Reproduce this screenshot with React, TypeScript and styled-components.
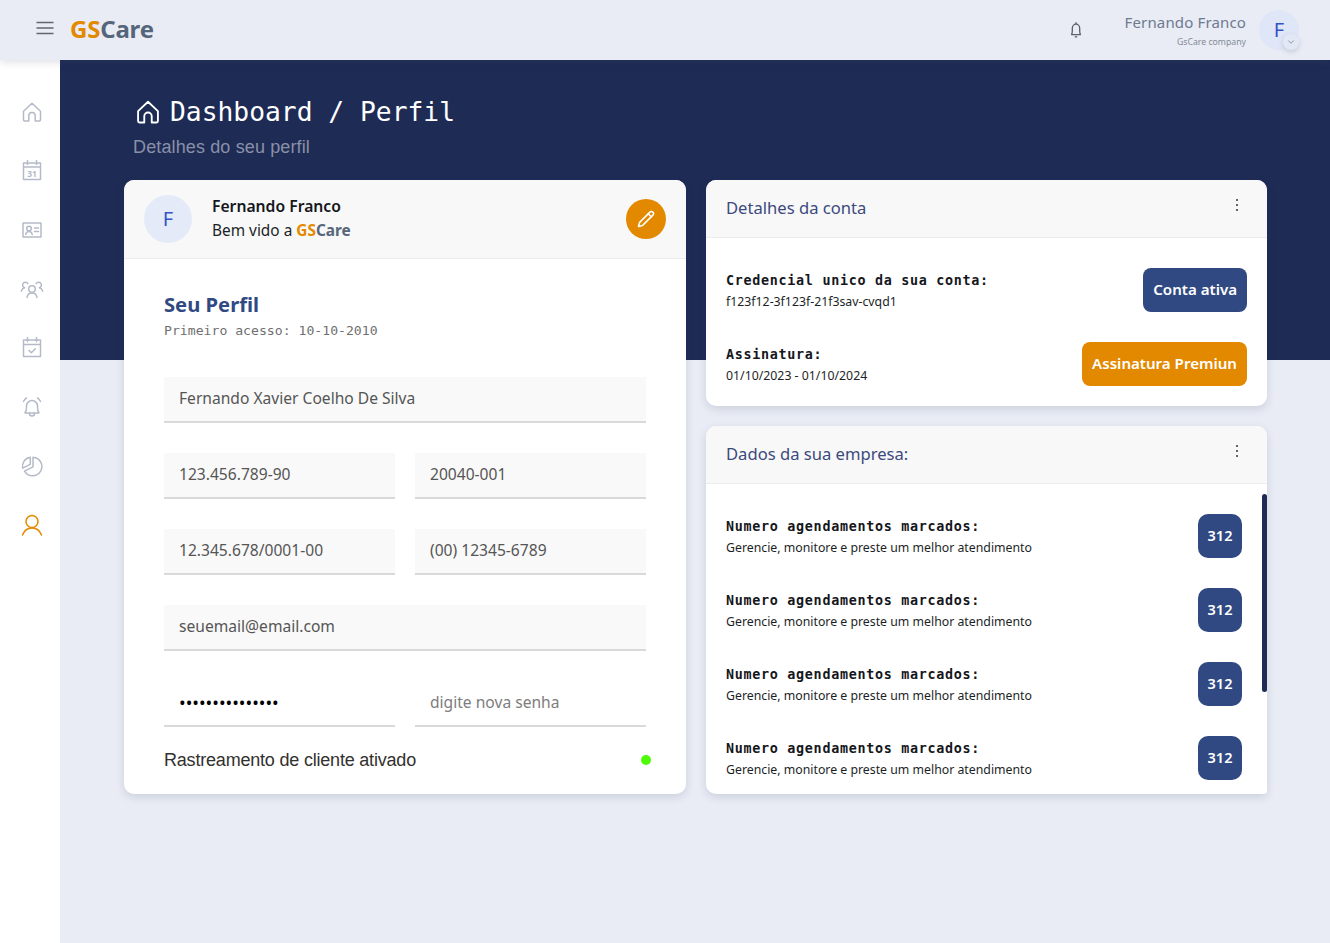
import React from "react";
import styled, { createGlobalStyle } from "styled-components";
import { Pencil, ChevronDown } from "lucide-react";

const Global = createGlobalStyle`
  html, body { margin: 0; padding: 0; }
  body {
    background: #e9ecf5;
    font-family: "Noto Sans", "Open Sans", sans-serif;
    overflow: hidden;
  }
  * { box-sizing: border-box; }
`;

const ORANGE = "#e38900";
const BLUE = "#314982";
const NAVY = "#1e2b55";
const MONO = `"DejaVu Sans Mono", "Liberation Mono", monospace`;

const Page = styled.div`
  display: flex;
  flex-direction: column;
  height: 943px;
`;

const TopBar = styled.header`
  position: relative;
  z-index: 2;
  flex: 0 0 60px;
  display: flex;
  align-items: center;
  padding: 0 31px 0 36px;
  background: #e9ecf5;
  box-shadow: 0 2px 8px rgba(60, 70, 100, 0.18);
`;

const Burger = styled.svg`
  width: 18px;
  height: 14px;
  margin: -4px 16px 0 0;
  color: #5f6670;
`;

const Logo = styled.div`
  flex: 1;
  padding-bottom: 3px;
  font-size: 24px;
  font-weight: 700;
  color: #56667a;
  letter-spacing: -0.2px;
`;

const Accent = styled.span`
  color: ${ORANGE};
`;

const BellIcon = styled.svg`
  width: 16px;
  height: 18px;
  margin-right: 41px;
  color: #5a5f66;
`;

const UserInfo = styled.div`
  display: flex;
  flex-direction: column;
  align-items: flex-end;
  margin-right: 13px;
`;

const UserName = styled.div`
  font-size: 15px;
  line-height: 18px;
  letter-spacing: 0.15px;
  color: #6d7a90;
`;

const UserCompany = styled.div`
  margin-top: 6px;
  font-size: 8.7px;
  line-height: 11px;
  color: #838a96;
`;

const TopAvatar = styled.div`
  position: relative;
  width: 40px;
  height: 40px;
  padding-bottom: 2px;
  border-radius: 50%;
  display: flex;
  align-items: center;
  justify-content: center;
  background: #dfe6f7;
  color: #3453c4;
  font-size: 20px;
`;

const AvatarChevron = styled.div`
  position: absolute;
  right: 0;
  bottom: 0;
  width: 16px;
  height: 16px;
  border-radius: 50%;
  display: flex;
  align-items: center;
  justify-content: center;
  background: #e3e8f6;
  color: #7d8798;
  box-shadow: 0 2px 5px rgba(60, 70, 100, 0.2);
`;

const Body = styled.div`
  flex: 1;
  display: flex;
  min-height: 0;
`;

const Sidebar = styled.nav`
  flex: 0 0 60px;
  display: flex;
  flex-direction: column;
  align-items: center;
  gap: 35px;
  padding: 40px 0 0 4px;
  background: #fff;
`;

const NavIcon = styled.svg<{ $active?: boolean }>`
  width: 24px;
  height: 24px;
  fill: none;
  stroke: ${(p) => (p.$active ? ORANGE : "#b4bac7")};
  stroke-width: 1.5;
  stroke-linecap: round;
  stroke-linejoin: round;
`;

const Main = styled.main`
  flex: 1;
  padding: 34px 63px 0 64px;
  background: linear-gradient(${NAVY} 300px, transparent 300px);
`;

const TitleRow = styled.div`
  display: flex;
  align-items: center;
  gap: 8px;
  height: 36px;
  padding-left: 10px;
`;

const Title = styled.h1`
  margin: 0;
  font-family: ${MONO};
  font-size: 26.3px;
  font-weight: 400;
  color: #fff;
  white-space: pre;
`;

const TitleIcon = styled.svg`
  width: 28px;
  height: 28px;
  fill: none;
  stroke: #fff;
  stroke-width: 1.6;
  stroke-linecap: round;
  stroke-linejoin: round;
`;

const Subtitle = styled.div`
  margin: 7px 0 0 9px;
  font-family: "Liberation Sans", Arial, sans-serif;
  font-size: 18px;
  line-height: 21px;
  letter-spacing: 0.13px;
  color: #8a90a7;
`;

const Columns = styled.div`
  display: grid;
  grid-template-columns: 562px 561px;
  gap: 20px;
  margin-top: 22px;
`;

const Card = styled.section<{ $squareEnd?: boolean }>`
  background: #fff;
  border-radius: 10px;
  border-bottom-right-radius: ${(p) => (p.$squareEnd ? "3px" : "10px")};
  box-shadow: 0 3px 8px rgba(50, 60, 90, 0.16);
  overflow: hidden;
`;

const RightColumn = styled.div`
  display: flex;
  flex-direction: column;
  gap: 20px;
`;

const ProfileHead = styled.div`
  display: flex;
  align-items: center;
  height: 79px;
  padding: 0 20px;
  background: #f8f8f8;
  border-bottom: 1px solid #ececec;
`;

const HeadAvatar = styled.div`
  flex: 0 0 48px;
  height: 48px;
  padding-bottom: 2px;
  border-radius: 50%;
  display: flex;
  align-items: center;
  justify-content: center;
  background: #e4eaf8;
  color: #3453c4;
  font-size: 20px;
`;

const HeadText = styled.div`
  flex: 1;
  margin-left: 20px;
  padding-bottom: 1px;
`;

const HeadName = styled.div`
  font-size: 15.7px;
  font-weight: 600;
  line-height: 22px;
  color: #15171c;
`;

const HeadGreet = styled.div`
  margin-top: 3px;
  font-size: 15.4px;
  line-height: 22px;
  color: #1c1f26;
`;

const Brand = styled.b`
  font-weight: 700;
  color: #56667a;
`;

const EditButton = styled.button`
  width: 40px;
  height: 40px;
  padding: 0;
  border: 0;
  border-radius: 50%;
  display: flex;
  align-items: center;
  justify-content: center;
  background: ${ORANGE};
  color: #fff;
`;

const ProfileBody = styled.div`
  display: flex;
  flex-direction: column;
  height: 535px;
  padding: 30px 40px 0;
`;

const SectionTitle = styled.h2`
  margin: 0;
  font-size: 20.2px;
  font-weight: 700;
  line-height: 30px;
  color: ${BLUE};
`;

const FirstAccess = styled.div`
  margin-top: 2px;
  font-family: ${MONO};
  font-size: 13.15px;
  line-height: 20px;
  color: #6f6f6f;
`;

const Form = styled.div`
  display: grid;
  grid-template-columns: 1fr 1fr;
  gap: 30px 20px;
  margin-top: 36px;
`;

const Field = styled.input<{ $wide?: boolean; $plain?: boolean }>`
  grid-column: ${(p) => (p.$wide ? "1 / -1" : "auto")};
  width: 100%;
  height: 46px;
  padding: 0 15px 2px;
  border: 0;
  border-bottom: 2px solid #d9d9dc;
  outline: none;
  background: ${(p) => (p.$plain ? "#fff" : "#f9f9f9")};
  font-family: "Noto Sans", sans-serif;
  font-size: 15.6px;
  color: #555;
  &::placeholder {
    color: #7d7d7d;
    opacity: 1;
  }
  &[type="password"] {
    color: #000;
    font-size: 17.7px;
  }
`;

const Tracking = styled.div`
  display: flex;
  align-items: center;
  justify-content: space-between;
  margin-top: 21px;
  font-family: "Liberation Sans", Arial, sans-serif;
  font-size: 18px;
  line-height: 24px;
  letter-spacing: -0.2px;
  color: #33302e;
`;

const StatusDot = styled.span`
  width: 10px;
  height: 10px;
  margin-right: -5px;
  border-radius: 50%;
  background: #4cfb05;
`;

const PanelHead = styled.div`
  display: flex;
  align-items: center;
  justify-content: space-between;
  height: 58px;
  padding: 0 28px 0 20px;
  background: #f8f8f8;
  border-bottom: 1px solid #ececec;
`;

const PanelTitle = styled.h3`
  margin: -2px 0 0;
  font-size: 16.6px;
  font-weight: 400;
  color: #3c4a7d;
`;

const Kebab = styled.div`
  display: flex;
  flex-direction: column;
  gap: 2.5px;
  margin: -7px 1px 0 0;
  & > i {
    width: 2.5px;
    height: 2.5px;
    border-radius: 50%;
    background: #333;
  }
`;

const AccountBody = styled.div`
  display: flex;
  flex-direction: column;
  gap: 30px;
  height: 168px;
  padding: 30px 20px 0;
`;

const InfoRow = styled.div`
  display: flex;
  align-items: center;
  justify-content: space-between;
  height: 44px;
`;

const InfoLabel = styled.div`
  padding-top: 2px;
  font-family: ${MONO};
  font-size: 13.4px;
  font-weight: 700;
  line-height: 20px;
  letter-spacing: 0.7px;
  color: #15171c;
  white-space: pre;
`;

const InfoText = styled.div`
  margin-top: 1px;
  font-size: 12.3px;
  line-height: 20px;
  color: #1c1f26;
`;

const ActionPill = styled.div<{ $color: string }>`
  height: 44px;
  padding: 0 10px 2px;
  border-radius: 8px;
  display: flex;
  align-items: center;
  background: ${(p) => p.$color};
  color: #fff;
  font-size: 15.1px;
  font-weight: 600;
`;

const CountBadge = styled.div`
  width: 44px;
  height: 44px;
  padding-bottom: 2px;
  border-radius: 10px;
  display: flex;
  align-items: center;
  justify-content: center;
  background: ${BLUE};
  color: #fff;
  font-size: 14.5px;
  font-weight: 600;
`;

const ScrollArea = styled.div`
  position: relative;
  display: flex;
  flex-direction: column;
  gap: 30px;
  height: 310px;
  padding: 30px 25px 0 20px;
  overflow: hidden;
`;

const ScrollThumb = styled.div`
  position: absolute;
  top: 10px;
  right: 0;
  width: 5px;
  height: 198px;
  border-radius: 3px;
  background: ${NAVY};
`;

const HomeShape = () => (
  <path d="M3.500 11.200 12 3.200l8.500 8v8.600c0 .8-.5 1.200-1.200 1.200H15.200v-5.400a3.200 3.200 0 0 0-6.400 0V21H4.700c-.7 0-1.200-.4-1.200-1.200z" />
);

const rows = [0, 1, 2, 3];

const App = () => {
  return (
    <Page>
      <Global />
      <TopBar>
        <Burger viewBox="0 0 18 14" fill="none" stroke="currentColor" strokeWidth="1.5">
          <path d="M0.500 1.500h17M0.500 7h17M0.500 12.500h17" />
        </Burger>
        <Logo>
          <Accent>GS</Accent>Care
        </Logo>
        <BellIcon viewBox="0 0 16 18" fill="none" stroke="currentColor" strokeWidth="1.300" strokeLinejoin="round">
          <path d="M8 1.200v1.400M3.600 13.600c.5-1 .7-2 .7-3.600V7.400C4.300 5 6 3 8 3s3.700 2 3.700 4.400V10c0 1.600.2 2.600.7 3.600z" />
          <path d="M6.800 15.800h2.400" />
        </BellIcon>
        <UserInfo>
          <UserName>Fernando Franco</UserName>
          <UserCompany>GsCare company</UserCompany>
        </UserInfo>
        <TopAvatar>
          F
          <AvatarChevron>
            <ChevronDown size={10} />
          </AvatarChevron>
        </TopAvatar>
      </TopBar>
      <Body>
        <Sidebar>
          <NavIcon viewBox="0 0 24 24">
            <HomeShape />
          </NavIcon>
          <NavIcon viewBox="0 1 24 24">
            <path d="M3.500 5h17v16.500h-17zM3.500 9h17M7.500 2.500v4M16.500 2.500v4" />
            <text x="12" y="18.500" fontSize="8.500" fontWeight="700" fontFamily="Noto Sans" textAnchor="middle" stroke="none" fill="#b4bac7">
              31
            </text>
          </NavIcon>
          <NavIcon viewBox="0 0 24 24">
            <path d="M3 5h18v14H3z" />
            <circle cx="9" cy="10.500" r="2.300" />
            <path d="M5.800 16.500c.3-2 1.500-3 3.200-3s2.900 1 3.200 3M14.500 10h4M14.500 13.500h4" />
          </NavIcon>
          <NavIcon viewBox="0 0 24 24">
            <circle cx="12" cy="12" r="3.300" />
            <path d="M7 20.500c.4-2.600 2.400-4.500 5-4.500s4.600 1.900 5 4.500" />
            <path d="M7.800 6.700A2.800 2.800 0 1 0 4.600 10.800c-1.700.5-2.900 1.700-3.300 3.400M16.200 6.700a2.800 2.800 0 1 1 3.200 4.100c1.700.5 2.900 1.700 3.300 3.400" />
          </NavIcon>
          <NavIcon viewBox="0 1 24 24">
            <path d="M3.500 5h17v16.500h-17zM3.500 9.500h17M7.500 2.500v4M16.500 2.500v4M9 15.500l2.300 2.200 4-4" />
          </NavIcon>
          <NavIcon viewBox="0 0 24 24">
            <path d="M5 18c1-1.500 1.500-3 1.500-5.500v-1.500a5.500 5.500 0 0 1 11 0v1.500c0 2.500.5 4 1.500 5.500z" />
            <path d="M9.500 18.500a2.500 2.500 0 0 0 5 0M3.500 6.500c.7-1.600 1.700-2.700 3-3.500M20.500 6.500c-.7-1.600-1.700-2.700-3-3.500" />
          </NavIcon>
          <NavIcon viewBox="0 0 24 24">
            <path d="M13 3.200a9.300 9.300 0 1 1-8.500 14L13 12.800z" />
            <path d="M10.300 3.200a9.300 9.300 0 0 0-7.700 11L10.300 10.300z" />
          </NavIcon>
          <NavIcon viewBox="0 0 24 24" $active>
            <circle cx="12" cy="8.500" r="6" />
            <path d="M2.500 22c1.500-4 5-7 9.500-7s8 3 9.500 7" />
          </NavIcon>
        </Sidebar>
        <Main>
          <TitleRow>
            <TitleIcon viewBox="0 0 24 24">
              <HomeShape />
            </TitleIcon>
            <Title>Dashboard / Perfil</Title>
          </TitleRow>
          <Subtitle>Detalhes do seu perfil</Subtitle>
          <Columns>
            <Card>
              <ProfileHead>
                <HeadAvatar>F</HeadAvatar>
                <HeadText>
                  <HeadName>Fernando Franco</HeadName>
                  <HeadGreet>
                    Bem vido a{" "}
                    <Brand>
                      <Accent>GS</Accent>Care
                    </Brand>
                  </HeadGreet>
                </HeadText>
                <EditButton aria-label="Editar">
                  <Pencil size={18} strokeWidth={2} />
                </EditButton>
              </ProfileHead>
              <ProfileBody>
                <SectionTitle>Seu Perfil</SectionTitle>
                <FirstAccess>Primeiro acesso: 10-10-2010</FirstAccess>
                <Form>
                  <Field $wide readOnly value="Fernando Xavier Coelho De Silva" />
                  <Field readOnly value="123.456.789-90" />
                  <Field readOnly value="20040-001" />
                  <Field readOnly value="12.345.678/0001-00" />
                  <Field readOnly value="(00) 12345-6789" />
                  <Field $wide readOnly value="seuemail@email.com" />
                  <Field $plain readOnly type="password" value="123456789012345" />
                  <Field $plain readOnly placeholder="digite nova senha" />
                </Form>
                <Tracking>
                  <span>Rastreamento de cliente ativado</span>
                  <StatusDot />
                </Tracking>
              </ProfileBody>
            </Card>
            <RightColumn>
              <Card>
                <PanelHead>
                  <PanelTitle>Detalhes da conta</PanelTitle>
                  <Kebab>
                    <i />
                    <i />
                    <i />
                  </Kebab>
                </PanelHead>
                <AccountBody>
                  <InfoRow>
                    <div>
                      <InfoLabel>Credencial unico da sua conta:</InfoLabel>
                      <InfoText>f123f12-3f123f-21f3sav-cvqd1</InfoText>
                    </div>
                    <ActionPill $color={BLUE}>Conta ativa</ActionPill>
                  </InfoRow>
                  <InfoRow>
                    <div>
                      <InfoLabel>Assinatura:</InfoLabel>
                      <InfoText>01/10/2023 - 01/10/2024</InfoText>
                    </div>
                    <ActionPill $color={ORANGE}>Assinatura Premiun</ActionPill>
                  </InfoRow>
                </AccountBody>
              </Card>
              <Card $squareEnd>
                <PanelHead>
                  <PanelTitle>Dados da sua empresa:</PanelTitle>
                  <Kebab>
                    <i />
                    <i />
                    <i />
                  </Kebab>
                </PanelHead>
                <ScrollArea>
                  <ScrollThumb />
                  {rows.map((r) => (
                    <InfoRow key={r}>
                      <div>
                        <InfoLabel>Numero agendamentos marcados:</InfoLabel>
                        <InfoText>Gerencie, monitore e preste um melhor atendimento</InfoText>
                      </div>
                      <CountBadge>312</CountBadge>
                    </InfoRow>
                  ))}
                </ScrollArea>
              </Card>
            </RightColumn>
          </Columns>
        </Main>
      </Body>
    </Page>
  );
};

export default App;
